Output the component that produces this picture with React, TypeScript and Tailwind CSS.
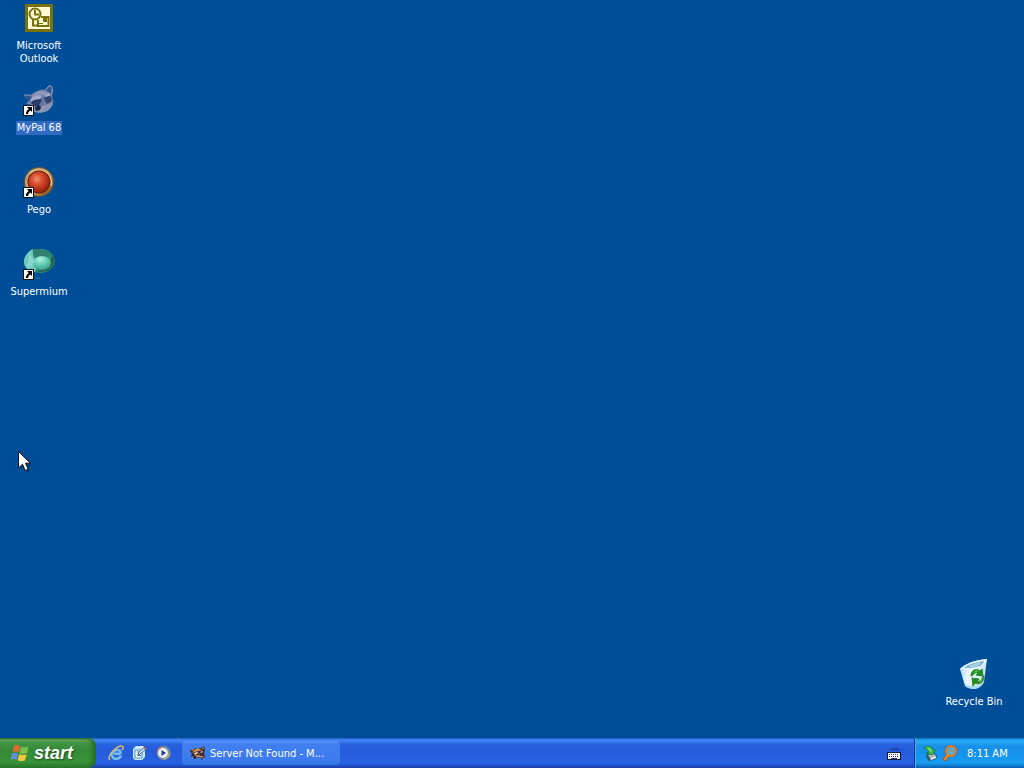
import type { ReactNode } from "react";

function ShortcutArrow() {
  return (
    <g>
      <path d="M0 20h11v11H0z" fill="#10141c" />
      <path d="M1 21h9v9H1z" fill="#fff" />
      <path d="M4 22h5v5l-1.500-1.500C6 26.500 5 27.500 5.200 29H3c-.3-2 1-3.800 2.700-5z" fill="#000" />
    </g>
  );
}

function OutlookIcon() {
  return (
    <svg viewBox="0 0 32 32" className="size-8" aria-hidden="true">
      <path d="M2 1h28v28H2z" fill="#77720c" />
      <path d="M5 4h22v22H5z" fill="#fffbd2" />
      <path d="M10 16v6.500h4M18 14h7.500v9H15v-6" fill="none" stroke="#77720c" strokeWidth="2" />
      <path d="M20 15h4v4h-4zM16 20h4v1h-4z" fill="#77720c" />
      <circle cx="12" cy="11" r="5.500" fill="#fffbd2" stroke="#77720c" strokeWidth="2" />
      <path d="M12 7v4.500h4" fill="none" stroke="#77720c" strokeWidth="2" />
    </svg>
  );
}

function RaccoonIcon() {
  return (
    <svg viewBox="0 0 32 32" className="size-8" aria-hidden="true">
      <path d="M1 10l6 0 5-3c4-2 7-3 10-2l4-4c3-1 4 1 4 5l-1 5c2 5 2 9-2 13-4 4-10 4-16 3l-2-7-6-1 3-4c-2-1-4-2-5-5z" fill="#6d7da8" />
      <path d="M1 10l6 0 2 2-3 4zM23 5l4-4c2 0 2 4 1 8z" fill="#2d568f" />
      <path d="M1 10l5 0 2 1M22 5l4-4c3-1 4 2 3 7" fill="none" stroke="#8d9bc0" />
      <path d="M9 11c3-4 7-6 12-5l6 3-7 2-5 5-7 1z" fill="#8c98bb" />
      <path d="M9 15c4-3 7-3 10-1l2 4-4 3-5 0-4-3z" fill="#2a3b69" />
      <path d="M21 12l5-2 3 3-1 4-4 2-2-3z" fill="#34466f" />
      <path d="M8 14c3-3 7-4 11-2l-2 2-6 1-3 2zM21 11l5-3 2 2-5 2z" fill="#a3adca" />
      <path d="M19 10l2 1 0 7-3 4-3 0 3-5z" fill="#68769f" />
      <path d="M11 24l7-3 3 0 8-4-1 5-4 4-7 2-5-1z" fill="#8995b5" />
      <path d="M12 23c2-3 5-3 6-1l-1 3-4 1z" fill="#182647" />
      <ShortcutArrow />
    </svg>
  );
}

function PegoIcon() {
  return (
    <svg viewBox="0 0 32 32" className="size-8" aria-hidden="true">
      <defs>
        <linearGradient id="pegoRim" x1="0" y1="0" x2="1" y2="1">
          <stop stopColor="#a99b79" />
          <stop offset=".5" stopColor="#d5a767" />
          <stop offset="1" stopColor="#754016" />
        </linearGradient>
        <radialGradient id="pegoBall" cx=".4" cy=".36" r=".68">
          <stop stopColor="#ef9274" />
          <stop offset=".35" stopColor="#d95232" />
          <stop offset=".75" stopColor="#b52d17" />
          <stop offset="1" stopColor="#85200e" />
        </radialGradient>
      </defs>
      <circle cx="16" cy="15" r="15" fill="#655633" />
      <circle cx="16" cy="15" r="14" fill="url(#pegoRim)" />
      <path d="M7 6a13 13 0 0 1 21 13" fill="none" stroke="#ebc58b" strokeWidth="1.500" />
      <circle cx="16" cy="15" r="11.500" fill="#70220f" />
      <circle cx="16" cy="15" r="10.500" fill="url(#pegoBall)" />
      <ShortcutArrow />
    </svg>
  );
}

function SupermiumIcon() {
  return (
    <svg viewBox="0 0 32 32" className="size-8" aria-hidden="true">
      <defs>
        <linearGradient id="smOuter" x1="0" y1="0" x2="1" y2="1">
          <stop stopColor="#4aa497" />
          <stop offset=".5" stopColor="#2f9987" />
          <stop offset="1" stopColor="#27705f" />
        </linearGradient>
        <radialGradient id="smCore" cx=".4" cy=".25" r=".8">
          <stop stopColor="#b0f2df" />
          <stop offset=".5" stopColor="#62ccb1" />
          <stop offset="1" stopColor="#349a86" />
        </radialGradient>
      </defs>
      <path d="M4 5C9-1 23-2 29 5c5 6 3 13-4 17-5 3-10 2-15 1C1 21-2 12 4 5z" fill="url(#smOuter)" />
      <path d="M4 5c2-3 4-4 6-5-1 5 1 10 5 14l-3 9C1 21-2 12 4 5z" fill="#6ec9bf" />
      <path d="M10 0c7-2 17 0 20 7-3-1-5 2-8 2-4 0-6-2-11 0-1-3-1-6-1-9z" fill="#2f8072" />
      <path d="M28 8l3-1c1 5-1 11-6 14-4 2-8 2-12 1 8 0 15-4 15-14z" fill="#27604d" />
      <ellipse cx="19" cy="14" rx="9" ry="7" fill="url(#smCore)" />
      <path d="M6 4l6 9-8 7 1-6zM3 15l8-4-2 7z" fill="#9be1d8" opacity=".6" />
      <path d="M12 28q2 2 5 1" stroke="#178b95" fill="none" />
      <ShortcutArrow />
    </svg>
  );
}

function RecycleIcon() {
  return (
    <svg viewBox="0 0 32 32" className="size-8" aria-hidden="true">
      <defs>
        <linearGradient id="binBody" x1="0" y1="0" x2="1" y2=".3">
          <stop stopColor="#9acfef" />
          <stop offset=".45" stopColor="#f0f7fb" />
          <stop offset="1" stopColor="#c6dfec" />
        </linearGradient>
      </defs>
      <path d="M2 10c4-5 15-9 27-10l-3 23c-1 3-5 6-9 7-4 0-8-1-10-3z" fill="url(#binBody)" />
      <path d="M2 10c5-5 15-9 27-10-1 5-4 8-9 9-6 2-12 2-18 1z" fill="#e3f3fa" />
      <path d="M6 9c5-4 12-6 20-7-1 4-4 5-8 6-4 1-8 1-12 1z" fill="#79b4d4" />
      <path d="M10 8c4-3 8-4 13-5-1 3-4 4-7 5z" fill="#a7d2e6" />
      <path d="M7 25c4 3 12 3 18-1-2 4-5 5-8 6-4 0-8-1-10-3z" fill="#a9daf2" />
      <path d="M13 17c0-6 5-8 9-5l2-2 1 7-7-1 2-2c-2-1-4 0-6 3zM26 17c0 7-5 9-9 7l-2 3-1-8 7 1-2 2c3 1 5-1 6-5z" fill="#268c24" stroke="#268c24" />
      <path d="M15 14l3-3 3 1-3 1zM23 20l2-2-1 4-3 2z" fill="#6fb85a" />
    </svg>
  );
}

function DesktopIcon({ label, selected = false, children }: { label: string; selected?: boolean; children: ReactNode }) {
  return (
    <button type="button" className="flex w-19 flex-col items-center gap-1 text-center">
      {children}
      <span className={selected ? "bg-[#316ac5] px-px pb-px" : "px-px pb-px"}>{label}</span>
    </button>
  );
}

function WindowsFlag() {
  return (
    <svg viewBox="0 0 20 18" className="h-[18px] w-5" aria-hidden="true">
      <path d="M4 2c2-1.500 4-1.500 6 0L8.500 8.500c-2-1.300-4-1.200-6 0z" fill="#e66736" />
      <path d="M11 2.500c2.500 1.300 5 1.300 7.500 0L17 9c-2.500 1.200-5 1-7.500-.3z" fill="#7dc04c" />
      <path d="M2 9.500c2-1 4-1 6 .3L6.500 16c-2-1.300-4-1.200-6 0z" fill="#628fe0" />
      <path d="M9.200 10c2.500 1.300 5 1.500 7.500.3L15 16.500c-2.500 1.200-5 1-7.300-.3z" fill="#f4c841" />
    </svg>
  );
}

function ExplorerIcon() {
  return (
    <svg viewBox="0 0 16 16" className="size-4" aria-hidden="true">
      <path d="M13 10.500C11.500 14.500 5.500 15 4.200 11 3 6 11 2.500 12.500 7c.2 1-.2 1.800-1 1.800H6" fill="none" stroke="#72bdf0" strokeWidth="2.500" />
      <path d="M2 15C-1 12 6 2.500 13 1c3-.4 2.500 2.500.8 4" fill="none" stroke="#dfba68" strokeWidth="1.500" />
    </svg>
  );
}

function ShowDesktopIcon() {
  return (
    <svg viewBox="0 0 16 16" className="size-4" aria-hidden="true">
      <path d="M4 1h7l2 2v9l-3 3H3l-2-2V4z" fill="#cbe8f6" />
      <path d="M3 5h7v8H3z" fill="#f5fcff" stroke="#4a91c6" />
      <path d="M5 7h3M5 10.500h4" stroke="#3a7fb9" />
      <path d="M6 10l1-3 6-5 1 2-6 5z" fill="#fff" stroke="#2d6097" />
      <path d="M13 2l2 1-1 2-2-1z" fill="#8f6c58" />
    </svg>
  );
}

function MediaIcon() {
  return (
    <svg viewBox="0 0 16 16" className="size-4" aria-hidden="true">
      <circle cx="7.500" cy="8" r="7" fill="#7485a5" />
      <path d="M7.500 2a6 6 0 0 0-6 6" fill="none" stroke="#c98262" strokeWidth="1.500" />
      <path d="M7.500 2a6 6 0 0 1 6 6" fill="none" stroke="#729c84" strokeWidth="1.500" />
      <path d="M13.500 8a6 6 0 0 1-6 6" fill="none" stroke="#bda875" strokeWidth="1.500" />
      <circle cx="7" cy="8" r="5" fill="#edf0fb" />
      <path d="M5.500 5L10 8l-4.500 3z" fill="#293982" />
    </svg>
  );
}

function TaskRaccoon() {
  return (
    <svg viewBox="0 0 16 16" className="size-4" aria-hidden="true">
      <path d="M1 4l3 0 4-1 3 0 3-2 1 4-1 3 1 4-2 1-1 2-2-3-2 1-1-2-1 3-2 0-1-3-2 1 1-4-2-1z" fill="#392a29" />
      <path d="M1 4l3 0-2 2zM12 3l2-1-1 3zM4 5l4-2 4 2-3 1-4 1-3 1z" fill="#c58c5b" />
      <path d="M4 8l4-1 0 1-3 2zM10 7l3-1-1 2z" fill="#f7dfc1" />
      <path d="M5 10l3 0 3 1 3 0-2 2-2-1-3 0z" fill="#cc8d59" />
      <path d="M8 8l2 0-1 2z" fill="#8a5b40" />
    </svg>
  );
}

function KeyboardIcon() {
  return (
    <svg viewBox="0 0 16 16" className="size-4" aria-hidden="true">
      <path d="M5 4q2 2 4 0 3 0 4 1" fill="none" stroke="#17276d" />
      <path d="M1 7h14v8H1z" fill="#101a45" />
      <path d="M2 8h12v6H2z" fill="#fff" />
      <path d="M3 9.500h10M3 11.500h10" stroke="#26356e" strokeDasharray="1 1" />
      <path d="M5 13.500h6" stroke="#26356e" />
    </svg>
  );
}

function SafeRemoveIcon() {
  return (
    <svg viewBox="0 0 16 16" className="size-4" aria-hidden="true">
      <path d="M4 9l6-3 4 5-1 3-7 2-3-4z" fill="#31536b" />
      <path d="M5 10l5-2 3 3-6 2z" fill="#a8bcc2" />
      <path d="M7 13l6-2 0 2-5 2z" fill="#edf0ee" />
      <path d="M1 2l3 0 2-1 3 2 1 2 3 0-4 5-6-2 3-1-3-3z" fill="#39b54c" stroke="#19723a" strokeWidth=".7" />
      <path d="M3 2l4 1 2 3-2 1-2-3z" fill="#77dc6d" />
    </svg>
  );
}

function SearchIcon() {
  return (
    <svg viewBox="0 0 16 16" className="size-4" aria-hidden="true">
      <path d="M5 10l-3 4" stroke="#955329" strokeWidth="4" strokeLinecap="round" />
      <circle cx="8" cy="6" r="5" fill="#49b5eb" stroke="#955329" strokeWidth="2.500" />
      <circle cx="8" cy="6" r="4.800" fill="none" stroke="#e58a32" strokeWidth="1.800" />
      <path d="M5 10l-3 4" stroke="#e58a32" strokeWidth="2.500" strokeLinecap="round" />
      <circle cx="8" cy="6" r="1.500" fill="#d9822d" />
    </svg>
  );
}

function Pointer() {
  return (
    <svg viewBox="0 0 14 22" className="pointer-events-none absolute top-[451px] left-[18px] h-[22px] w-[14px]" aria-hidden="true">
      <path d="M3 3v16l3-3 3 5 3-1-2-5h4z" fill="#002b62" opacity=".5" />
      <path d="M.5.500v16.500l4-3.800 2.700 6.300 3-1.300-2.700-6h5z" fill="#fff" stroke="#101014" />
    </svg>
  );
}

export default function App() {
  return (
    <div className="relative flex min-h-screen flex-col bg-[#004e98] font-['DejaVu_Sans_Condensed','DejaVu_Sans',sans-serif] text-[11px] leading-[13px] text-white select-none">
      <main className="flex flex-1 justify-between pt-[3px] pb-[29px] pl-px">
        <nav aria-label="Desktop shortcuts" className="grid auto-rows-[82px] content-start items-start">
          <DesktopIcon label="Microsoft Outlook"><OutlookIcon /></DesktopIcon>
          <DesktopIcon label="MyPal 68" selected><RaccoonIcon /></DesktopIcon>
          <DesktopIcon label="Pego"><PegoIcon /></DesktopIcon>
          <DesktopIcon label="Supermium"><SupermiumIcon /></DesktopIcon>
        </nav>
        <div className="flex items-end pr-3">
          <DesktopIcon label="Recycle Bin"><RecycleIcon /></DesktopIcon>
        </div>
      </main>

      <footer className="flex h-[30px] items-stretch bg-[linear-gradient(#1941a5_0,#3b7ff0_1px,#3f83f2_3px,#2a62df_6px,#245bdb_12px,#2761e3_25px,#1e4fc6_28px,#173da5_30px)]">
        <button type="button" className="flex w-24 items-center gap-1 rounded-r-lg bg-[linear-gradient(#2b7130_0,#6bac68_2px,#429445_5px,#368a38_12px,#389338_24px,#2a7a2c_30px)] pl-2.5 shadow-[inset_-3px_0_4px_#216b24]">
          <WindowsFlag />
          <span className="font-['Liberation_Sans',Arial,sans-serif] text-[18px] leading-5 font-bold italic [text-shadow:1px_1px_2px_#174b18]">start</span>
        </button>
        <nav aria-label="Quick launch" className="flex items-center gap-2 pl-3">
          <button type="button" aria-label="Internet Explorer"><ExplorerIcon /></button>
          <button type="button" aria-label="Show desktop"><ShowDesktopIcon /></button>
          <button type="button" aria-label="Media player"><MediaIcon /></button>
        </nav>
        <div className="flex flex-1 items-center pl-2.5">
          <button type="button" className="flex h-6 w-[158px] items-center gap-1 rounded-sm bg-[linear-gradient(#5b97fa_0,#417ff0_3px,#3c7bed_20px,#3470df_24px)] px-2 text-left">
            <TaskRaccoon />
            <span className="truncate">Server Not Found - M...</span>
          </button>
        </div>
        <button type="button" aria-label="Language bar" className="px-3"><KeyboardIcon /></button>
        <div className="flex w-[110px] items-center gap-1 border-l border-[#103a86] bg-[linear-gradient(#1465b8_0,#1aa5f0_2px,#27a9f3_4px,#1990e9_8px,#1592ec_16px,#189cf0_25px,#0f78d0_28px,#0b59ac_30px)] pl-2 shadow-[inset_1px_0_0_#35b5f5]">
          <button type="button" aria-label="Safely remove hardware"><SafeRemoveIcon /></button>
          <button type="button" aria-label="Search"><SearchIcon /></button>
          <time className="ml-1">8:11 AM</time>
        </div>
      </footer>
      <Pointer />
    </div>
  );
}
